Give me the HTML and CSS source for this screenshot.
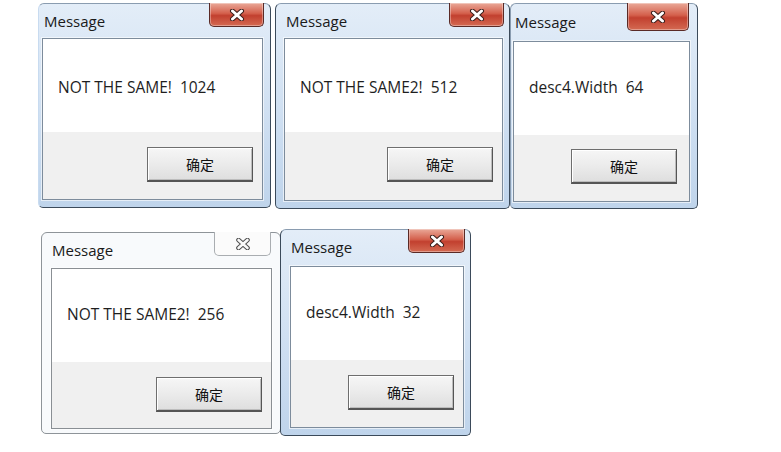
FILE: index.html
```html
<!DOCTYPE html>
<html>
<head>
<meta charset="utf-8">
<link rel="stylesheet" href="styles.css">
</head>
<body>
<div class="desk">
  <div class="win w1">
    <div class="title"><span class="ttext">Message</span>
      <div class="close"><svg width="16" height="12" viewBox="0 0 16 12"><path d="M3.5 2 L12.5 10 M12.5 2 L3.5 10" class="xo"/><path d="M3.5 2 L12.5 10 M12.5 2 L3.5 10" class="xi"/></svg></div>
    </div>
    <div class="client">
      <div class="msg">NOT THE SAME!&nbsp; 1024</div>
      <div class="foot"><div class="btn">确定</div></div>
    </div>
  </div>
  <div class="win w2">
    <div class="title"><span class="ttext">Message</span>
      <div class="close"><svg width="16" height="12" viewBox="0 0 16 12"><path d="M3.5 2 L12.5 10 M12.5 2 L3.5 10" class="xo"/><path d="M3.5 2 L12.5 10 M12.5 2 L3.5 10" class="xi"/></svg></div>
    </div>
    <div class="client">
      <div class="msg">NOT THE SAME2!&nbsp; 512</div>
      <div class="foot"><div class="btn">确定</div></div>
    </div>
  </div>
  <div class="win w3">
    <div class="title"><span class="ttext">Message</span>
      <div class="close"><svg width="16" height="12" viewBox="0 0 16 12"><path d="M3.5 2 L12.5 10 M12.5 2 L3.5 10" class="xo"/><path d="M3.5 2 L12.5 10 M12.5 2 L3.5 10" class="xi"/></svg></div>
    </div>
    <div class="client">
      <div class="msg">desc4.Width&nbsp; 64</div>
      <div class="foot"><div class="btn">确定</div></div>
    </div>
  </div>
  <div class="win w4 inactive">
    <div class="title"><span class="ttext">Message</span>
      <div class="close"><svg width="16" height="12" viewBox="0 0 16 12"><path d="M3.5 2 L12.5 10 M12.5 2 L3.5 10" class="xo"/><path d="M3.5 2 L12.5 10 M12.5 2 L3.5 10" class="xi"/></svg></div>
    </div>
    <div class="client">
      <div class="msg">NOT THE SAME2!&nbsp; 256</div>
      <div class="foot"><div class="btn">确定</div></div>
    </div>
  </div>
  <div class="win w5">
    <div class="title"><span class="ttext">Message</span>
      <div class="close"><svg width="16" height="12" viewBox="0 0 16 12"><path d="M3.5 2 L12.5 10 M12.5 2 L3.5 10" class="xo"/><path d="M3.5 2 L12.5 10 M12.5 2 L3.5 10" class="xi"/></svg></div>
    </div>
    <div class="client">
      <div class="msg">desc4.Width&nbsp; 32</div>
      <div class="foot"><div class="btn">确定</div></div>
    </div>
  </div>
</div>
</body>
</html>
```
FILE: styles.css
```css
html, body {
  margin: 0;
  padding: 0;
  background: #ffffff;
}
.desk {
  position: relative;
  width: 781px;
  height: 452px;
  overflow: hidden;
  font-family: "Open Sans", "Noto Sans", sans-serif;
  color: #1e1e1e;
}
.win {
  position: absolute;
  box-sizing: border-box;
  display: flex;
  flex-direction: column;
  background: linear-gradient(#e3edf8, #cddef1 60%, #bfd4eb);
  border: 1px solid #3b4a5a;
  border-top-color: #8a9cb0;
  border-radius: 6px 6px 5px 5px;
}
.w1 { left: 38px; top: 3px; width: 233px; height: 205px; padding: 0 7px 7px 3px; border-left-color: #c8dbf0; }
.w2 { left: 275px; top: 3px; width: 235px; height: 206px; padding: 0 6px 7px 8px; }
.w3 { left: 510px; top: 3px; width: 188px; height: 206px; padding: 0 7px 6px 2px; border-left-color: #8a9cb0; }
.w4 { left: 41px; top: 232px; width: 240px; height: 202px; padding: 0 8px 4px 9px; }
.w5 { left: 280px; top: 229px; width: 191px; height: 207px; padding: 0 6px 7px 9px; }

.inactive {
  background: #f8fafc;
  border-color: #8e9499;
}

.title {
  position: relative;
  flex: none;
  display: flex;
  align-items: center;
}
.w1 .title, .w2 .title { height: 34px; }
.w3 .title { height: 37px; }
.w4 .title { height: 35px; }
.w5 .title { height: 36px; }

.ttext {
  font-size: 15px;
  color: #1a1a1a;
  margin-left: 2px;
  margin-top: 0;
}
.w3 .ttext { margin-top: -2px; }
.w4 .ttext { margin-top: -2px; margin-left: 1px; }
.w5 .ttext { margin-top: -2px; margin-left: 1px; }

.close {
  position: absolute;
  top: -1px;
  right: -1px;
  width: 55px;
  height: 24px;
  box-sizing: border-box;
  border: 1px solid #5a2a26;
  border-top: none;
  border-radius: 0 0 5px 5px;
  background: linear-gradient(#eaa999, #d4604c 45%, #c2402f 55%, #d46a52);
  display: flex;
  align-items: center;
  justify-content: center;
  box-shadow: inset 0 0 0 1px rgba(255,255,255,0.35);
}
.w3 .close { width: 62px; height: 28px; right: 1px; }
.w5 .close { width: 57px; height: 24px; }
.xo { stroke: #3a1d1a; stroke-width: 5; fill: none; stroke-linecap: round; }
.xi { stroke: #ffffff; stroke-width: 3; fill: none; stroke-linecap: round; }

.inactive .close {
  background: #fbfbfb;
  border: 1px solid #a9adb1;
  border-top: none;
  box-shadow: none;
  width: 57px;
  height: 24px;
  right: 1px;
}
.inactive .xo { stroke: #4e4e4e; stroke-width: 4.6; }
.inactive .xi { stroke: #fbfbfb; stroke-width: 2.6; }

.client {
  flex: 1;
  display: flex;
  flex-direction: column;
  background: #ffffff;
  border: 1px solid #7d8c9c;
  box-shadow: 0 0 0 1px rgba(255,255,255,0.6);
}
.inactive .client { border-color: #8a8f94; }

.msg {
  height: 93px;
  box-sizing: border-box;
  padding: 37px 0 0 15px;
  font-size: 15.5px;
  white-space: nowrap;
  background: #ffffff;
}
.w3 .msg, .w4 .msg, .w5 .msg { padding-top: 34px; }
.foot {
  flex: 1;
  background: #f0f0f0;
  display: flex;
  justify-content: flex-end;
  align-items: flex-start;
  padding: 15px 9px 0 0;
}
.w3 .foot { padding: 14px 12px 0 0; }
.btn {
  width: 106px;
  height: 35px;
  box-sizing: border-box;
  border: 1px solid #6e6e6e;
  border-bottom: 2px solid #555;
  border-right-color: #555;
  background: linear-gradient(#f6f6f6, #ebebeb 50%, #dedede);
  box-shadow: inset 1px 1px 0 #ffffff, inset -1px -1px 0 #bcbcbc;
  display: flex;
  align-items: center;
  justify-content: center;
  font-family: "Noto Sans CJK SC", sans-serif;
  font-size: 14px;
  color: #111;
}
```
